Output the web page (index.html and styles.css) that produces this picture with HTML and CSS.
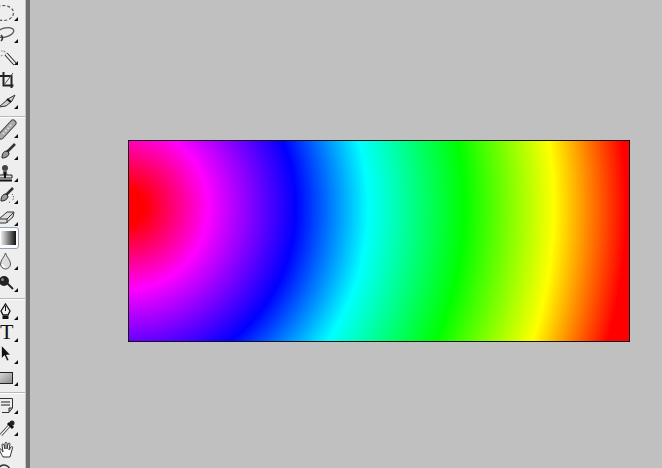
FILE: index.html
```html
<!DOCTYPE html>
<html lang="en">
<head>
<meta charset="utf-8">
<title>Gradient document</title>
<link rel="stylesheet" href="styles.css">
</head>
<body>
<div class="app">
  <aside class="toolbox">
    <div class="group first">
      <div class="tool flyout"><svg viewBox="0 0 24 22"><ellipse cx="3.5" cy="13" rx="10" ry="7.5" fill="none" stroke="#555" stroke-width="1.2" stroke-dasharray="3 2"/></svg></div>
      <div class="tool flyout"><svg viewBox="0 0 24 22"><ellipse cx="5" cy="10.5" rx="9" ry="4.5" transform="rotate(-15 5 10.5)" fill="none" stroke="#555" stroke-width="1.3"/><path d="M1 13c2 2 2 4 0 6" fill="none" stroke="#333" stroke-width="1.6"/></svg></div>
      <div class="tool flyout"><svg viewBox="0 0 24 22"><path d="M6 10l9 10" stroke="#222" stroke-width="4"/><path d="M6 10l9 10" stroke="#eee" stroke-width="2"/><path d="M1 7h3M4 7l2 2M1 12l2-1" stroke="#888" stroke-width="1.2" stroke-dasharray="1.5 1"/></svg></div>
      <div class="tool"><svg viewBox="0 0 24 22"><path d="M3.500 6v13.500H13.500M0 10h11.500V22" fill="none" stroke="#222" stroke-width="2"/><path d="M4 19l9-12" stroke="#555" stroke-width="1"/></svg></div>
      <div class="tool flyout"><svg viewBox="0 0 24 22"><path d="M-1 19l9-8 7-4-3 6-6 5z" fill="#ccc" stroke="#333"/><path d="M7 11l4 3" stroke="#111" stroke-width="2"/></svg></div>
    </div>
    <div class="group">
      <div class="tool flyout"><svg viewBox="0 0 24 22"><path d="M1 19L13 6" stroke="#444" stroke-width="7" stroke-linecap="round"/><path d="M1 19L13 6" stroke="#aaa" stroke-width="5" stroke-linecap="round"/><path d="M3 17l8-9" stroke="#eee" stroke-width="1.500" stroke-dasharray="1.500 2"/></svg></div>
      <div class="tool flyout"><svg viewBox="0 0 24 22"><path d="M15 5L7 13" stroke="#333" stroke-width="2.500"/><path d="M7 12c-3 0-5 2-5 7 4 0 7-2 7-5z" fill="#999" stroke="#222"/></svg></div>
      <div class="tool flyout"><svg viewBox="0 0 24 22"><circle cx="5" cy="7" r="3" fill="#444"/><path d="M3.500 9h3l1 5h-5z" fill="#666"/><path d="M-1 14h13v3H-1z" fill="#ddd" stroke="#222"/><path d="M-1 19.500h13" stroke="#111" stroke-width="2"/><path d="M5 11v6" stroke="#111" stroke-width="2"/></svg></div>
      <div class="tool flyout"><svg viewBox="0 0 24 22"><path d="M13 5L6 12" stroke="#333" stroke-width="2.500"/><path d="M6 11c-3 0-5 2-5 7 4 0 7-2 7-5z" fill="#999" stroke="#222"/><path d="M12 11c2 2 2 5 0 7M10 19l-2 1" fill="none" stroke="#333" stroke-dasharray="1 1.500"/></svg></div>
      <div class="tool flyout"><svg viewBox="0 0 24 22"><path d="M-1 14l8-7h7l-1 5-7 6h-7z" fill="#ddd" stroke="#333"/><path d="M-1 14h8l6-6M7 14v4" fill="none" stroke="#333"/></svg></div>
      <div class="tool selected"><div class="swatch"></div></div>
      <div class="tool flyout"><svg viewBox="0 0 24 22"><path d="M5.500 4c-1 4-5 7-5 11a5 5 0 0 0 10 0c0-4-4-7-5-11z" fill="#ddd" stroke="#555"/><path d="M2.500 15c0 2 1 3 3 3" fill="none" stroke="#fff" stroke-width="1.500"/></svg></div>
      <div class="tool flyout"><svg viewBox="0 0 24 22"><circle cx="4" cy="10" r="5" fill="#222"/><circle cx="2.500" cy="8.500" r="1.500" fill="#888"/><path d="M7 12l6 6" stroke="#222" stroke-width="1.800"/></svg></div>
    </div>
    <div class="group">
      <div class="tool flyout"><svg viewBox="0 0 24 22"><path d="M5.500 5l4.500 7-2 4H3l-2-4z" fill="#eee" stroke="#111" stroke-width="1.300"/><path d="M5.500 7v5" stroke="#111"/><path d="M2.500 18.500h6" stroke="#111" stroke-width="3"/></svg></div>
      <div class="tool flyout type">T</div>
      <div class="tool flyout"><svg viewBox="0 0 24 22"><path d="M1.500 2.500v13l3-3 2.500 5.500 2-1-2.500-5h4z" fill="#111" stroke="#fff" stroke-width=".6"/></svg></div>
      <div class="tool flyout"><svg viewBox="0 0 24 22"><defs><linearGradient id="shape" x1="0" y1="0" x2="1" y2="1"><stop offset="0" stop-color="#ddd"/><stop offset="1" stop-color="#888"/></linearGradient></defs><rect x="-2" y="7.500" width="14.500" height="11" fill="url(#shape)" stroke="#222"/></svg></div>
    </div>
    <div class="group">
      <div class="tool flyout"><svg viewBox="0 0 24 22"><path d="M0 5.500h12.500V15L9 19.500H2" fill="#eee" stroke="#333"/><path d="M12 15H9v4" fill="#aaa" stroke="#333"/><path d="M1 9h9M1 12h9" stroke="#222"/></svg></div>
      <div class="tool flyout"><svg viewBox="0 0 24 22"><path d="M1 20L9 11" stroke="#444" stroke-width="3"/><path d="M1 20L9 11" stroke="#fff" stroke-width="1.200"/><path d="M8 8l5 5" stroke="#111" stroke-width="3"/><circle cx="12" cy="8" r="2.500" fill="#222"/></svg></div>
      <div class="tool"><svg viewBox="0 0 24 22"><path d="M3 20C1 16-1 13 0 12c1-.5 2 1 3 3L2 8c0-1.500 1.500-1.500 2 0l1 4V6.500c0-1.500 2-1.500 2 0V12l1-5c.5-1.500 2-1 2 0l-1 6 2-3c1-1 2 0 1.500 1L10 20z" fill="#fff" stroke="#333"/></svg></div>
      <div class="tool"><svg viewBox="0 0 24 22"><circle cx="4" cy="12" r="6" fill="#eee" stroke="#333" stroke-width="1.500"/></svg></div>
    </div>
  </aside>
  <div class="divider"></div>
  <main class="workspace">
    <div class="document"></div>
  </main>
</div>
</body>
</html>
```
FILE: styles.css
```css
* { box-sizing: border-box; }
html, body { margin: 0; height: 100%; overflow: hidden; }
.app { display: flex; width: 662px; height: 468px; background: #c0c0c0; }
.toolbox { width: 26px; height: 468px; flex: none; background: #eeeeee; overflow: hidden; border-right: 1px solid #c4c4c4; }
.group { padding-bottom: 5px; border-top: 1px solid #b8b8b8; box-shadow: inset 0 1px 0 #fff; }
.group.first { border-top: none; box-shadow: none; padding-bottom: 6px; }
.tool { position: relative; height: 22px; }
.tool svg { display: block; width: 24px; height: 22px; overflow: visible; }
.flyout::after { content: ""; position: absolute; left: 14px; top: 17px; width: 4px; height: 4px; background: #111; clip-path: polygon(100% 0, 100% 100%, 0 100%); }
.selected { margin-left: -4px; width: 23px; padding: 3px 2px 2px 4px; border: 1px solid #94a3b3; border-radius: 3px; background: #fbfbfb; }
.swatch { width: 15px; height: 14px; background: linear-gradient(90deg, #ececec, #111); }
.type { font: 22px/22px "Liberation Serif", serif; color: #111; text-align: left; }
.divider { width: 4px; flex: none; background: #6e6e6e; }
.workspace { flex: 1; min-width: 0; padding: 140px 0 0 98px; }
.document { width: 502px; height: 202px; border: 1px solid #111; background: radial-gradient(circle 510px at -3px 66px, #f00 18px, #f0f 82px, #00f 170px, #0ff 242px, #0f0 338px, #ff0 428px, #f00 500px); }
```
